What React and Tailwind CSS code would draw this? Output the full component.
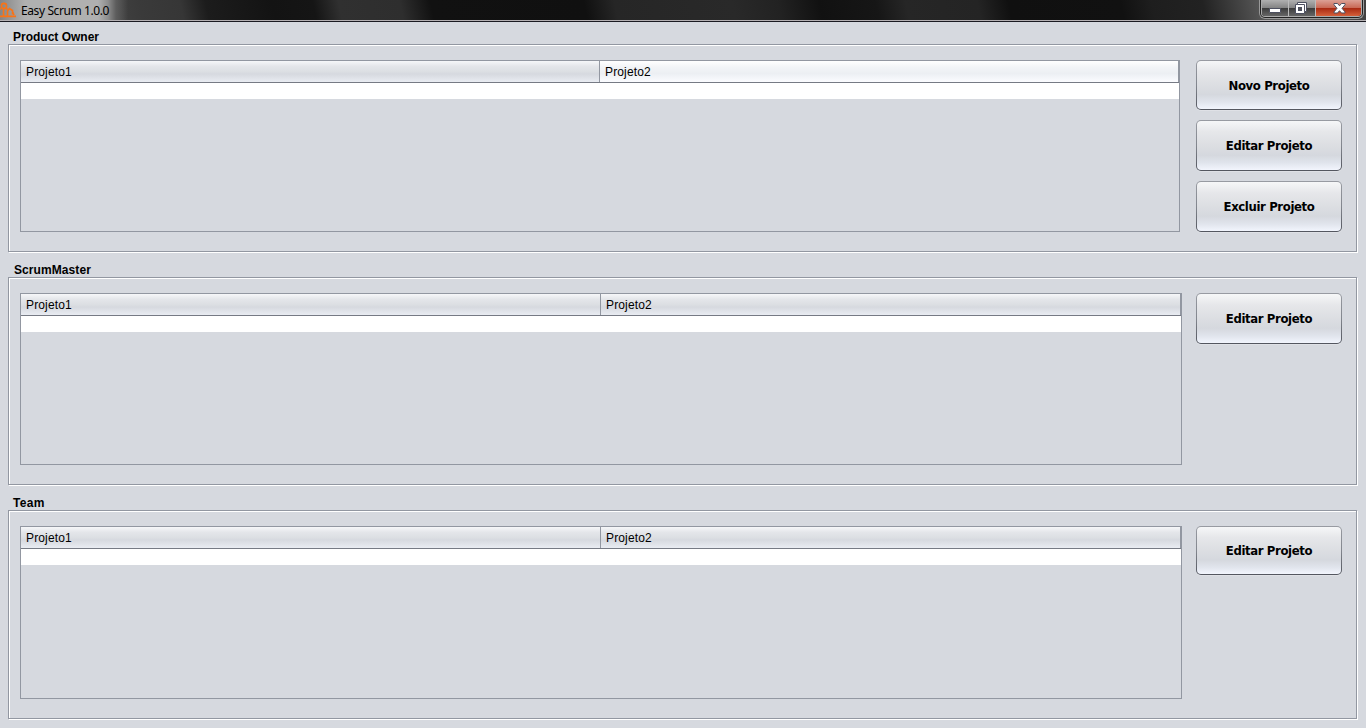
const HEADER = "bg-[linear-gradient(180deg,#f6f7f9_0%,#e4e6ea_25%,#dcdfe3_50%,#d6d9df_62%,#e9ecf2_100%)]";
const HEADER_HOT = "bg-[linear-gradient(180deg,#ffffff_0%,#f2f4f7_30%,#eceff3_60%,#fbfcff_100%)]";

function Btn({ children, h, pt = "" }) {
  return (
    <button className={`block w-[146px] shrink-0 rounded-[5px] bg-[linear-gradient(180deg,#989ba2_0%,#82868e_50%,#53565f_100%)] p-px shadow-[0_1px_1px_rgba(255,255,255,0.25)] ${h}`}>
      <span className={`flex h-full w-full items-center justify-center whitespace-nowrap rounded-[4px] bg-[linear-gradient(180deg,#f6f7f8_0%,#e6e7ea_22%,#dcdee2_50%,#d5d8de_70%,#e0e4ec_85%,#f2f5fd_100%)] font-['DejaVu_Sans_Condensed','DejaVu_Sans',sans-serif] text-[13px] font-bold leading-4 tracking-[-0.38px] text-black [font-stretch:condensed] ${pt}`}>
        {children}
      </span>
    </button>
  );
}

function Table({ w, h, c1, hot }) {
  return (
    <div className={`flex shrink-0 flex-col border border-[#9297a1] ${w} ${h}`}>
      <div className="flex h-[22px] shrink-0 border-b border-[#767a84] text-[12px] leading-[22px] tracking-[0.15px] text-black">
        <div className={`shrink-0 border-r border-[#9297a1] pl-[5px] ${c1} ${HEADER}`}>Projeto1</div>
        <div className={`flex-1 border-r border-[#9297a1] pl-[5px] ${hot ? HEADER_HOT : HEADER}`}>Projeto2</div>
      </div>
      <div className="h-4 shrink-0 bg-white" />
    </div>
  );
}

function Panel({ title, titleClass, h, gap, children }) {
  return (
    <section className="shrink-0">
      <h2 className={`flex items-end text-[12px] font-bold leading-[14px] text-black ${titleClass}`}>{title}</h2>
      <div className={`ml-2 flex w-[1349px] items-start border border-[#9297a1] pl-[11px] pt-[15px] shadow-[1px_1px_0_#fff,inset_1px_1px_0_#fff] ${h} ${gap}`}>
        {children}
      </div>
    </section>
  );
}

function TitleBar() {
  return (
    <header className="flex h-[22px] shrink-0 items-start justify-between border-b border-[#1b1b22] bg-[linear-gradient(78deg,#555_0px,#444_100px,#3a3a3a_140px,#363636_180px,#1c1c1c_205px,#131313_270px,#151515_310px,#303030_335px,#2e2e2e_395px,#111_425px,#101010_575px,#262626_605px,#292929_720px,#222_765px,#111_805px,#161616_860px,#262626_890px,#242424_960px,#101010_990px,#111_1100px,#1e1e1e_1130px,#222_1180px,#555_1235px,#666_1260px,#333_1366px)] shadow-[inset_0_-1px_0_#b4b0b3]">
      <div className="flex h-5 items-center overflow-hidden bg-[linear-gradient(90deg,#858585_0px,#b0b0b0_25px,#b0b0b0_98px,#8d8d8d_108px,#5d5d5d_116px,#45454500_128px)] pr-5">
        <svg className="h-5 w-[17px] shrink-0" viewBox="0 0 17 20" fill="none" stroke="#f97316" strokeWidth="1.6">
          <path d="M0 16.4H16M3.5 9V16M1 8.5L0 9.5M6 8L7.5 9.5M7.5 16V11L9.5 8.5L12.5 10.5V14.5M12.5 11.5L14 15" />
          <circle cx="4" cy="6" r="2.6" />
        </svg>
        <span className="ml-[4px] mt-[2px] whitespace-nowrap font-['Noto_Sans',sans-serif] text-[12px] leading-5 tracking-[-0.4px] text-black">Easy Scrum 1.0.0</span>
      </div>
      <div className="mr-[2px] h-[19px] w-[105px] rounded-b-[6px] border border-t-0 border-[#999] bg-[#222] px-px pb-px">
        <div className="flex h-[17px] overflow-hidden rounded-b-[4px] border border-t-0 border-[#aaa]">
          <div className="w-[27px] shrink-0 border-r border-[#bbb] bg-[linear-gradient(180deg,#b0b0b0_0%,#858585_48%,#3c3c3c_52%,#666_100%)]">
            <svg className="h-4 w-[26px]" viewBox="0 0 26 16"><rect x="7.5" y="8.5" width="11" height="4" rx="0.5" fill="#fff" stroke="#4d5060" /></svg>
          </div>
          <div className="w-[27px] shrink-0 border-r border-[#bbb] bg-[linear-gradient(180deg,#b0b0b0_0%,#858585_48%,#3c3c3c_52%,#666_100%)]">
            <svg className="h-4 w-[26px]" viewBox="0 0 26 16">
              <path d="M8.5 2.5h9v9h-2v2h-9v-9h2z" fill="#fff" stroke="#4d5060" />
              <path d="M8.5 4.5h7v7" fill="none" stroke="#4d5060" />
              <rect x="9.5" y="7.5" width="3" height="3" fill="#555" stroke="#4d5060" />
            </svg>
          </div>
          <div className="flex-1 bg-[linear-gradient(180deg,#dca195_0%,#c96a56_48%,#a92a12_52%,#d5603a_100%)]">
            <svg className="h-4 w-[46px]" viewBox="0 0 46 16"><path d="M18 3.5h3.5l2 2.3 2-2.3H29v1.2l-3 3.6 3 3.6v1.1h-3.5l-2-2.3-2 2.3H18v-1.1l3-3.6-3-3.6z" fill="#fff" stroke="#4d5060" /></svg>
          </div>
        </div>
      </div>
    </header>
  );
}

export default function App() {
  return (
    <main className="flex h-[728px] w-[1366px] flex-col overflow-hidden bg-[#d6d9df] font-['Liberation_Sans',Arial,sans-serif]">
      <TitleBar />
      <Panel title="Product Owner" titleClass="h-[22px] pl-[13px]" h="h-[208px]" gap="gap-4">
        <Table w="w-[1160px]" h="h-[172px]" c1="w-[579px]" hot />
        <div className="flex flex-col gap-[10px]">
          <Btn h="h-[50px]" pt="pt-[2px]">Novo Projeto</Btn>
          <Btn h="h-[51px]">Editar Projeto</Btn>
          <Btn h="h-[51px]">Excluir Projeto</Btn>
        </div>
      </Panel>
      <Panel title="ScrumMaster" titleClass="h-[25px] pl-[14px] tracking-[0.08px]" h="h-[208px]" gap="gap-[14px]">
        <Table w="w-[1162px]" h="h-[172px]" c1="w-[580px]" />
        <Btn h="h-[51px]">Editar Projeto</Btn>
      </Panel>
      <Panel title="Team" titleClass="h-[25px] pl-[13px] tracking-[0.35px]" h="h-[209px]" gap="gap-[14px]">
        <Table w="w-[1162px]" h="h-[173px]" c1="w-[580px]" />
        <Btn h="h-[49px]">Editar Projeto</Btn>
      </Panel>
    </main>
  );
}
